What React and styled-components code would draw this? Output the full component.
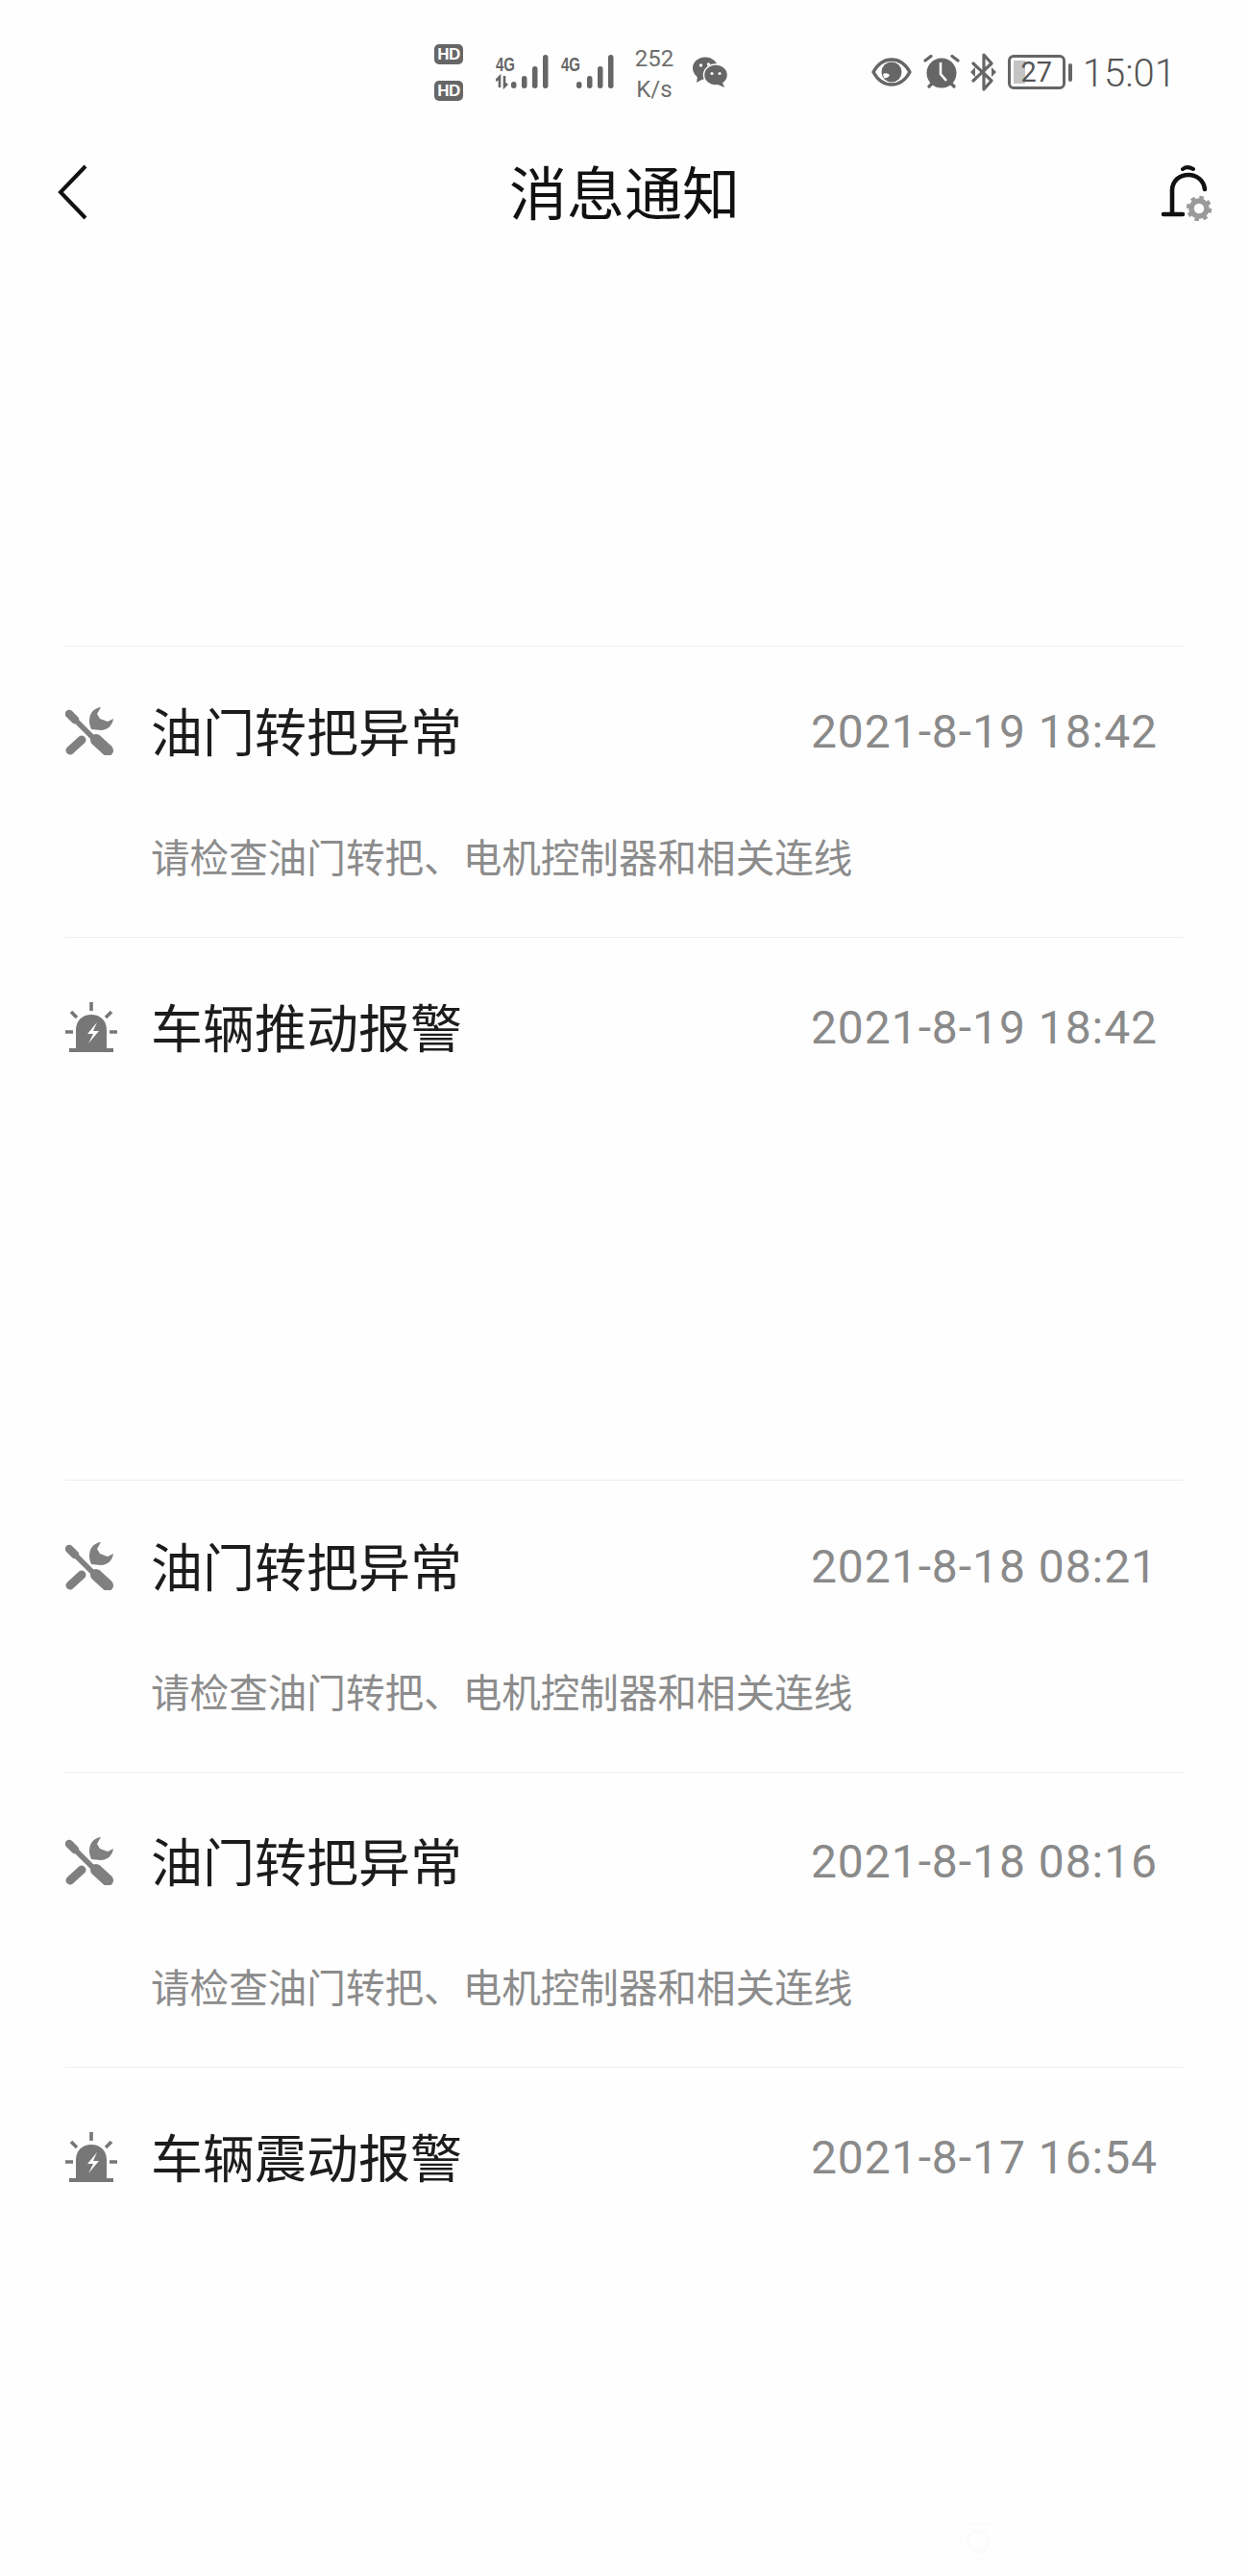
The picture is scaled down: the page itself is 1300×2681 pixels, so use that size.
import React from "react";
import styled, { createGlobalStyle } from "styled-components";

const GlobalStyle = createGlobalStyle`
  html, body {
    margin: 0;
    padding: 0;
    background: #fefefe;
  }
  body {
    font-family: "Noto Sans CJK SC", "Noto Sans", sans-serif;
  }
`;

const Page = styled.div`
  position: relative;
  width: 1300px;
  height: 2681px;
  overflow: hidden;
  background: #fefefe;
`;

const StatusBar = styled.div`
  display: flex;
  align-items: center;
  height: 150px;
  padding: 0 76px 0 452px;
  box-sizing: border-box;
  color: #666;
`;

const StatusLeft = styled.div`
  display: flex;
  align-items: center;
`;

const StatusRight = styled.div`
  display: flex;
  align-items: center;
  margin-left: auto;
`;

const HdStack = styled.div`
  display: flex;
  flex-direction: column;
  gap: 17px;
  margin-right: 34px;
`;

const HdBadge = styled.span`
  display: block;
  width: 30px;
  height: 21px;
  border-radius: 5px;
  background: #666;
  color: #fefefe;
  font: 700 17px/21px "Liberation Sans", sans-serif;
  letter-spacing: -0.5px;
  text-align: center;
`;

const Speed = styled.div`
  width: 46px;
  margin: 0 17px 0 17px;
  padding-top: 3px;
  font: 400 24px/32px Roboto, sans-serif;
  text-align: center;
  color: #6e6e6e;
`;

const StatusIcon = styled.svg`
  display: block;
  flex: none;
  margin-right: ${(p) => p.$gap || 0}px;
`;

const Battery = styled.div`
  position: relative;
  box-sizing: border-box;
  width: 60px;
  height: 36px;
  margin-right: 3px;
  border: 3px solid #666;
  border-radius: 6px;
  font: 400 29px/30px Roboto, sans-serif;
  text-align: center;
  color: #555;
`;

const BatteryFill = styled.span`
  position: absolute;
  left: 3px;
  top: 3px;
  bottom: 3px;
  width: 12px;
  background: #c4c4c4;
`;

const BatteryLevel = styled.span`
  position: relative;
`;

const BatteryNub = styled.span`
  display: block;
  width: 4px;
  height: 19px;
  margin-right: 11px;
  border-radius: 2px;
  background: #666;
`;

const Clock = styled.div`
  padding-top: 3px;
  font: 300 40px/44px Roboto, sans-serif;
  color: #555;
`;

const NavBar = styled.div`
  display: grid;
  grid-template-columns: 1fr auto 1fr;
  align-items: center;
  height: 100px;
  padding: 0 36px;
`;

const BackIcon = styled.svg`
  display: block;
  margin-left: 24px;
`;

const NavTitle = styled.div`
  height: 100px;
  font-size: 60px;
  line-height: 96px;
  font-weight: 400;
  color: #111;
`;

const NavRight = styled.div`
  display: flex;
  justify-content: flex-end;
`;

const List = styled.div`
  padding: 422px 68px 0;
`;

const Row = styled.div`
  box-sizing: border-box;
  height: ${(p) => p.$height}px;
  padding: ${(p) => p.$top}px 27px 0 0;
  border-top: 1px solid #eeeeee;
`;

const RowHead = styled.div`
  display: flex;
  align-items: center;
  height: 60px;
`;

const IconSlot = styled.div`
  width: 89px;
  flex: none;
  padding-bottom: 3px;
`;

const RowTitle = styled.div`
  flex: 1;
  height: 60px;
  font-size: 54px;
  line-height: 56px;
  color: #1c1c1c;
`;

const RowDate = styled.div`
  font-family: Roboto, sans-serif;
  font-size: 48px;
  line-height: 60px;
  font-weight: 400;
  letter-spacing: 0.95px;
  color: #8a8a8a;
`;

const RowDesc = styled.div`
  margin: 69px 0 0 89px;
  font-size: 40.6px;
  line-height: 60px;
  color: #8c8c8c;
`;

const Watermark = styled.svg`
  position: absolute;
  left: 1000px;
  top: 2626px;
`;

const HdMarks = () => (
  <HdStack>
    <HdBadge>HD</HdBadge>
    <HdBadge>HD</HdBadge>
  </HdStack>
);

const Signal = ({ arrows, gap }) => (
  <StatusIcon width="57" height="42" viewBox="0 -3 57 42" $gap={gap} fill="#666">
    <text x="0" y="17" fontFamily="Liberation Sans, sans-serif" fontWeight="700" fontSize="21" textLength="20" lengthAdjust="spacingAndGlyphs">4G</text>
    {arrows && <path d="M4 34V23l-4 4M9 22v11l3-3" stroke="#666" strokeWidth="2.6" fill="none" />}
    <rect x="16" y="28" width="5.5" height="7" rx="2.7" />
    <rect x="27" y="22" width="5.5" height="13" rx="2.7" />
    <rect x="38" y="12" width="5.5" height="23" rx="2.7" />
    <rect x="49" y="0" width="5.5" height="35" rx="2.7" />
  </StatusIcon>
);

const WeChat = () => (
  <StatusIcon width="36" height="32" viewBox="0 0 36 32" fill="#666">
    <ellipse cx="13" cy="12" rx="13" ry="11.5" />
    <path d="M5 20l-1 7 7-4z" />
    <ellipse cx="24" cy="19" rx="12.5" ry="11" stroke="#fefefe" strokeWidth="1.5" />
    <path d="M31 27l2 5-7-3z" />
    <circle cx="8.5" cy="9" r="1.7" fill="#fefefe" />
    <circle cx="16.5" cy="8" r="1.7" fill="#fefefe" />
    <circle cx="20" cy="17.5" r="1.6" fill="#fefefe" />
    <circle cx="28" cy="17.5" r="1.6" fill="#fefefe" />
  </StatusIcon>
);

const Eye = () => (
  <StatusIcon width="42" height="30" viewBox="0 0 42 30" $gap={12}>
    <path d="M2 15C7 6 14 2 21 2s14 4 19 13c-5 9-12 13-19 13S7 24 2 15z" fill="none" stroke="#666" strokeWidth="3.4" strokeLinejoin="round" />
    <circle cx="21" cy="15" r="10.5" fill="#666" />
    <path d="M12 17c2-1 5-1 7 1-1 2-3 4-6 3z" fill="#fefefe" />
  </StatusIcon>
);

const Alarm = () => (
  <StatusIcon width="38" height="36" viewBox="0 0 38 36" $gap={11}>
    <circle cx="19" cy="19" r="15.5" fill="#666" />
    <path d="M2 6l6-4.5M36 6l-6-4.5M6 33l3-3M32 33l-3-3" stroke="#666" strokeWidth="3.2" strokeLinecap="round" />
    <path d="M18 8v12l6 7" fill="none" stroke="#fefefe" strokeWidth="2.6" />
  </StatusIcon>
);

const Bluetooth = () => (
  <StatusIcon width="27" height="40" viewBox="0 0 27 40" $gap={12}>
    <path d="M3 11l19 18-8 9V2l8 9L3 29" fill="none" stroke="#666" strokeWidth="3.2" strokeLinejoin="round" strokeLinecap="round" />
    <path d="M0 20l5-5v10zM27 20l-5-5v10z" fill="#666" />
  </StatusIcon>
);

const BellSettings = () => (
  <svg width="60" height="60" viewBox="0 0 60 60">
    <path d="M7 53h20M16 53V28c0-10 8-16 17-16s16 6 17 15" fill="none" stroke="#111" strokeWidth="4.6" strokeLinecap="round" />
    <path d="M27 6c3-2.4 7-2.4 11 0" fill="none" stroke="#111" strokeWidth="4" strokeLinecap="round" />
    <circle cx="44" cy="47" r="8" fill="none" stroke="#9a9a9a" strokeWidth="5.5" />
    <circle cx="44" cy="47" r="11.5" fill="none" stroke="#9a9a9a" strokeWidth="3.5" strokeDasharray="4.5 4.53" />
  </svg>
);

const ToolsIcon = () => (
  <svg width="50" height="50" viewBox="0 0 50 50" style={{ display: "block" }}>
    <path d="M4 7l26 26" stroke="#808080" strokeWidth="5.5" strokeLinecap="round" />
    <path d="M4 7l6 6" stroke="#808080" strokeWidth="8.5" strokeLinecap="round" />
    <path d="M32 34l12 11" stroke="#808080" strokeWidth="12" strokeLinecap="round" />
    <path d="M5 45l12-11" stroke="#808080" strokeWidth="9" strokeLinecap="round" />
    <path d="M37 0C29 1 25 7 25 14c0 4 1 6 2 9l10 1c7 0 12-5 13-12l-6 3-8-3-3-5z" fill="#808080" />
  </svg>
);

const SirenIcon = () => (
  <svg width="54" height="52" viewBox="0 0 54 52" style={{ display: "block" }}>
    <path d="M11 50V29c0-10 7-16 16-16s16 6 16 16v21z" fill="#777" />
    <rect x="4" y="48" width="46" height="4" fill="#777" />
    <path d="M27 0v9M6 10l6 6M48 10l-6 6M0 31h8M46 31h8" stroke="#777" strokeWidth="3.6" />
    <path d="M33 21l-10 12h6l-5 10 11-13h-6z" fill="#fefefe" />
  </svg>
);

const notifications = [
  { id: 1, kind: "tools", title: "油门转把异常", date: "2021-8-19 18:42", height: 303, top: 59, desc: true },
  { id: 2, kind: "siren", title: "车辆推动报警", date: "2021-8-19 18:42", height: 565, top: 64 },
  { id: 3, kind: "tools", title: "油门转把异常", date: "2021-8-18 08:21", height: 304, top: 60, desc: true },
  { id: 4, kind: "tools", title: "油门转把异常", date: "2021-8-18 08:16", height: 307, top: 63, desc: true },
  { id: 5, kind: "siren", title: "车辆震动报警", date: "2021-8-17 16:54", height: 400, top: 64 },
];

const NotificationRow = ({ kind, title, date, height, top, desc }) => (
  <Row $height={height} $top={top}>
    <RowHead>
      <IconSlot>{kind === "tools" ? <ToolsIcon /> : <SirenIcon />}</IconSlot>
      <RowTitle>{title}</RowTitle>
      <RowDate>{date}</RowDate>
    </RowHead>
    {desc && <RowDesc>请检查油门转把、电机控制器和相关连线</RowDesc>}
  </Row>
);

const App = () => (
  <Page>
    <GlobalStyle />
    <StatusBar>
      <StatusLeft>
        <HdMarks />
        <Signal arrows gap={11} />
        <Signal />
        <Speed>
          252
          <br />
          K/s
        </Speed>
        <WeChat />
      </StatusLeft>
      <StatusRight>
        <Eye />
        <Alarm />
        <Bluetooth />
        <Battery>
          <BatteryFill />
          <BatteryLevel>27</BatteryLevel>
        </Battery>
        <BatteryNub />
        <Clock>15:01</Clock>
      </StatusRight>
    </StatusBar>
    <NavBar>
      <BackIcon width="32" height="58" viewBox="0 0 32 58">
        <path d="M29 2L3 29l26 27" fill="none" stroke="#111" strokeWidth="4" />
      </BackIcon>
      <NavTitle>消息通知</NavTitle>
      <NavRight>
        <BellSettings />
      </NavRight>
    </NavBar>
    <List>
      {notifications.map(({ id, ...n }) => (
        <NotificationRow key={id} {...n} />
      ))}
    </List>
    <Watermark width="36" height="42" viewBox="0 0 36 42">
      <rect x="1" y="1" width="34" height="36" rx="4" fill="none" stroke="#fcfcfc" strokeWidth="2" />
      <circle cx="18" cy="19" r="11" fill="none" stroke="#fbfbfb" strokeWidth="3" />
    </Watermark>
  </Page>
);

export default App;
